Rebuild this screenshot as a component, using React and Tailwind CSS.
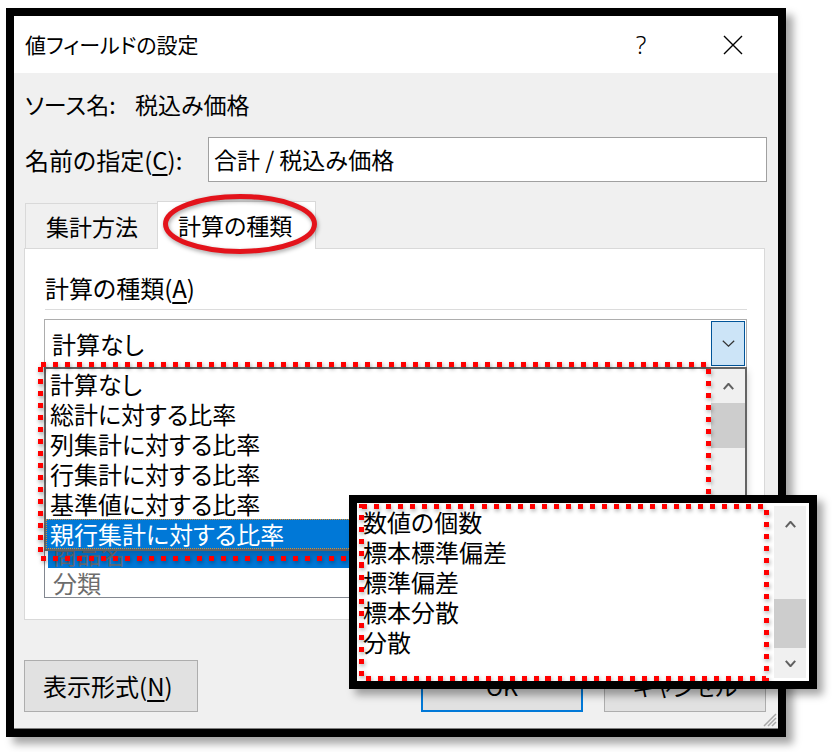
import React from 'react';

const Chevron = ({ up = false, w = 13, h = 7, sw = 1.2, color = '#333' }) => (
  <svg width={w} height={h} viewBox={`0 0 ${w} ${h}`}>
    <polyline
      points={up ? `0.8,${h - 0.8} ${w / 2},0.8 ${w - 0.8},${h - 0.8}` : `0.8,0.8 ${w / 2},${h - 0.8} ${w - 0.8},0.8`}
      fill="none"
      stroke={color}
      strokeWidth={sw}
    />
  </svg>
);

const calcItems = [
  '計算なし',
  '総計に対する比率',
  '列集計に対する比率',
  '行集計に対する比率',
  '基準値に対する比率',
  '親行集計に対する比率',
];

const zoomItems = ['数値の個数', '標本標準偏差', '標準偏差', '標本分散', '分散'];

export default function App() {
  return (
    <div className="relative w-[832px] h-[752px] overflow-hidden bg-white pl-[6px] pt-[8px] text-black font-['Noto_Sans_CJK_JP','Noto_Sans',sans-serif] [font-feature-settings:'palt']">
      {/* dialog window */}
      <div className="w-[780px] h-[729px] border-[8px] border-black flex flex-col shadow-[7px_7px_8px_rgba(0,0,0,0.35)]">
        {/* title bar */}
        <div className="h-[57px] shrink-0 bg-white flex items-center pl-[11px]">
          <span className="text-[21px]">値フィールドの設定</span>
          <div className="ml-auto mr-[35px] flex items-center gap-[72px]">
            <span className="w-[20px] text-center text-[25px] leading-none font-['Noto_Sans',sans-serif] font-light">?</span>
            <svg width="20" height="20" viewBox="0 0 20 20">
              <path d="M1 1L19 19M19 1L1 19" stroke="#000" strokeWidth="1.4" fill="none" />
            </svg>
          </div>
        </div>

        {/* body */}
        <div className="relative flex-1 flex flex-col bg-[#f0f0f0] pl-[11px] border-b border-[#808080]">
          <div className="mt-[16px] h-[30px] flex items-center text-[23px]">
            <span className="w-[110px]">ソース名:</span>
            <span>税込み価格</span>
          </div>

          <div className="mt-[18px] h-[45px] flex items-center">
            <span className="w-[183px] text-[24px]">
              名前の指定(<u className="underline-offset-4">C</u>):
            </span>
            <div className="w-[559px] h-[45px] bg-white border border-[#a0a0a0] flex items-center pl-[5px] text-[23px] whitespace-pre [font-feature-settings:normal]">
              合計 / 税込み価格
            </div>
          </div>

          {/* tabs */}
          <div className="mt-[19px] h-[47px] flex items-end">
            <div className="w-[132px] h-[45px] border-t border-l border-[#d9d9d9] flex items-center pl-[20px] text-[23px]">
              集計方法
            </div>
            <div className="relative z-10 -mb-px w-[159px] h-[48px] bg-white border border-b-0 border-[#d9d9d9] flex items-center pl-[20px] text-[23px]">
              計算の種類
            </div>
          </div>

          {/* tab panel */}
          <div className="-ml-px w-[741px] h-[372px] shrink-0 bg-white border border-[#d9d9d9] flex flex-col pl-[20px] pr-[17px]">
            <div className="mt-[24px] h-[30px] flex items-center text-[24px]">
              計算の種類(<u className="underline-offset-4">A</u>)
            </div>
            <div className="mt-[6px] h-px bg-[#dcdcdc]" />

            {/* combo box */}
            <div className="relative z-10 mt-[9px] -ml-px h-[49px] border border-[#adadad] p-px flex bg-white">
              <div className="flex-1 flex items-center pl-[6px] text-[24px]">計算なし</div>
              <div className="w-[34px] bg-[#cce4f7] border border-[#005499] flex items-center justify-center">
                <Chevron />
              </div>

              {/* open dropdown list */}
              <div className="absolute left-[-1px] top-[47px] w-[703px] h-[184px] bg-white border-2 border-[#646464] flex shadow-[0_4px_8px_rgba(0,0,0,0.2)]">
                <div className="flex-1 flex flex-col">
                  {calcItems.map((t, i) =>
                    i === calcItems.length - 1 ? (
                      <div
                        key={t}
                        className="h-[30px] leading-[30px] pl-[4px] text-[24px] bg-[#0078d7] text-white outline outline-1 outline-dotted outline-[#e0902e] -outline-offset-1"
                      >
                        {t}
                      </div>
                    ) : (
                      <div key={t} className="h-[30px] leading-[30px] pl-[4px] text-[24px]">
                        {t}
                      </div>
                    )
                  )}
                </div>
                <div className="w-[34px] bg-[#f0f0f0] flex flex-col">
                  <div className="h-[34px] flex items-center justify-center">
                    <Chevron up w={11} h={7} sw={2} color="#606060" />
                  </div>
                  <div className="h-[45px] bg-[#cdcdcd]" />
                </div>
              </div>
            </div>

            {/* base field / item lists, mostly hidden under the dropdown */}
            <div className="mt-auto mb-[21px] -ml-px flex gap-[21px]">
              <div className="w-[330px] h-[190px] bg-white border border-[#828790] px-[3px] flex flex-col justify-end">
                <div className="h-[29px] leading-[29px] pl-[5px] text-[24px] bg-[#0078d7] text-[#5f6b7a]">商品名</div>
                <div className="h-[29px] leading-[29px] pl-[5px] text-[24px] text-[#6d6d6d]">分類</div>
              </div>
              <div className="flex-1 h-[190px] bg-white border border-[#828790]" />
            </div>
          </div>

          {/* buttons */}
          <div className="mt-[40px] -ml-px h-[52px] flex">
            <div className="w-[174px] h-[52px] bg-[#e1e1e1] border border-[#adadad] flex items-center pl-[18px] text-[24px]">
              表示形式(<u className="underline-offset-4">N</u>)
            </div>
            <div className="ml-[223px] w-[162px] h-[52px] bg-[#e1e1e1] border-2 border-[#0078d7] flex items-center justify-center text-[23px]">
              OK
            </div>
            <div className="ml-[21px] w-[162px] h-[52px] bg-[#e1e1e1] border border-[#adadad] flex items-center justify-center text-[23px]">
              キャンセル
            </div>
          </div>

          {/* resize grip */}
          <svg className="absolute right-[1px] bottom-[1px]" width="16" height="16" viewBox="0 0 16 16">
            <path d="M15 3L3 15M15 7L7 15M15 11L11 15" stroke="#a8a8a8" strokeWidth="1.5" fill="none" />
          </svg>
        </div>
      </div>

      {/* annotations: red ellipse and dotted frame */}
      <svg
        className="absolute left-0 top-0 z-20 pointer-events-none drop-shadow-[1px_2px_2px_rgba(0,0,0,0.35)]"
        width="832"
        height="752"
        viewBox="0 0 832 752"
      >
        <ellipse cx="240" cy="224" rx="74.5" ry="27.5" fill="none" stroke="#e3131b" strokeWidth="5" />
        <rect
          x="40.5"
          y="364.5"
          width="667.5"
          height="194"
          fill="none"
          stroke="#ff0000"
          strokeWidth="5"
          strokeDasharray="5 7"
          shapeRendering="crispEdges"
        />
      </svg>

      {/* zoomed call-out of the rest of the list */}
      <div className="absolute left-[349px] top-[495px] z-30 w-[468px] h-[194px] border-[8px] border-black bg-white flex shadow-[6px_6px_8px_rgba(0,0,0,0.35)]">
        <div className="flex-1 flex flex-col pt-[4px] pl-[6px]">
          {zoomItems.map((t) => (
            <div key={t} className="h-[30px] leading-[30px] text-[24px]">
              {t}
            </div>
          ))}
        </div>
        <div className="w-[32px] my-[3px] mr-[3px] bg-[#f0f0f0] flex flex-col">
          <div className="h-[36px] flex items-center justify-center">
            <Chevron up w={11} h={7} sw={2} color="#606060" />
          </div>
          <div className="h-[57px]" />
          <div className="h-[49px] bg-[#cdcdcd]" />
          <div className="flex-1 flex items-center justify-center">
            <Chevron w={11} h={7} sw={2} color="#606060" />
          </div>
        </div>
        <svg
          className="absolute inset-0 pointer-events-none drop-shadow-[1px_2px_2px_rgba(0,0,0,0.35)]"
          width="452"
          height="178"
          viewBox="0 0 452 178"
        >
          <rect
            x="4.5"
            y="3.5"
            width="404.5"
            height="172"
            fill="none"
            stroke="#ff0000"
            strokeWidth="5"
            strokeDasharray="5 7"
            shapeRendering="crispEdges"
          />
        </svg>
      </div>
    </div>
  );
}
